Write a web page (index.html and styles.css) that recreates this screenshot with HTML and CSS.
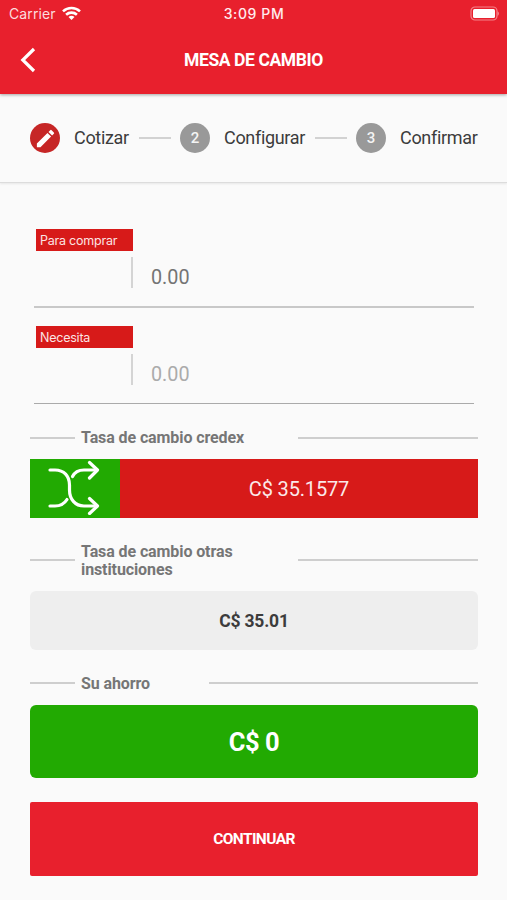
FILE: index.html
```html
<!DOCTYPE html>
<html lang="es">
<head>
<meta charset="utf-8">
<title>Mesa de cambio</title>
<link rel="stylesheet" href="styles.css">
</head>
<body>
<header class="header">
  <div class="status">
    <div class="status-left">
      <span class="carrier">Carrier</span>
      <svg class="wifi" width="19" height="15" viewBox="0 0 19 15" fill="none" stroke="#fff" stroke-width="2.6">
        <path d="M1 5.4C5.8.9 13.200.9 18 5.400M4.100 8.700C7.100 5.900 11.900 5.900 14.900 8.700"/>
        <path d="M6.500 11C8.200 9.400 10.800 9.400 12.500 11L9.500 14Z" fill="#fff" stroke="none"/>
      </svg>
    </div>
    <span class="clock">3:09 PM</span>
    <div class="status-right">
      <svg width="31" height="15" viewBox="0 0 31 15">
        <rect x="3" y="1" width="26" height="13" rx="4" fill="none" stroke="#f4828a" stroke-width="1.2"/>
        <rect x="5" y="3" width="22" height="9" rx="1.500" fill="#fff"/>
        <path d="M29.600 5.200C31.200 6 31.200 9 29.600 9.800Z" fill="#f4949a"/>
      </svg>
    </div>
  </div>
  <div class="titlebar">
    <svg class="back" width="16" height="26" viewBox="0 0 16 26" fill="none" stroke="#fff" stroke-width="3.200">
      <path d="M14 2L2.800 13L14 24"/>
    </svg>
    <h1 class="title">MESA DE CAMBIO</h1>
    <span></span>
  </div>
</header>
<nav class="steps">
  <span class="dot active">
    <svg width="23" height="23" viewBox="0 0 24 24" fill="#fff">
      <path d="M3 17.250V21h3.750L17.810 9.940l-3.750-3.750zM20.710 7.040a1 1 0 0 0 0-1.410l-2.340-2.340a1 1 0 0 0-1.410 0l-1.830 1.830 3.750 3.750z"/>
    </svg>
  </span>
  <span class="step-name one">Cotizar</span>
  <span class="link"></span>
  <span class="dot">2</span>
  <span class="step-name two">Configurar</span>
  <span class="link"></span>
  <span class="dot">3</span>
  <span class="step-name three">Confirmar</span>
</nav>
<main class="content">
  <div class="field">
    <span class="tag">Para comprar</span>
    <div class="entry"><span class="currency"></span><span class="amount">0.00</span></div>
  </div>
  <div class="field readonly">
    <span class="tag">Necesita</span>
    <div class="entry"><span class="currency"></span><span class="amount">0.00</span></div>
  </div>
  <div class="divider credex"><h2>Tasa de cambio credex</h2></div>
  <div class="rate">
    <div class="rate-icon">
      <svg width="54" height="56" viewBox="0 0 54 56" fill="none" stroke="#fff" stroke-width="3.200" stroke-linecap="round" stroke-linejoin="round">
        <path d="M3 11H8C17 11 22.500 17 22.500 26V31C22.500 40 28 47 37 47H49"/>
        <path d="M25.500 17.500C27.500 13.500 32 11 37 11H49M3 47H8C13 47 17.500 44.500 20 40.500"/>
        <path d="M42.500 3.500L50.500 11L42.500 19M42.500 39.500L50.500 47L42.500 54.500"/>
      </svg>
    </div>
    <div class="rate-value">C$ 35.1577</div>
  </div>
  <div class="divider others"><h2>Tasa de cambio otras instituciones</h2></div>
  <div class="other-rate">C$ 35.01</div>
  <div class="divider savings"><h2>Su ahorro</h2></div>
  <div class="saved">C$ 0</div>
  <button class="continue">CONTINUAR</button>
</main>
</body>
</html>
```
FILE: styles.css
```css
* { box-sizing: border-box; }
body { margin: 0; min-height: 900px; background: #fafafa; font-family: Roboto, sans-serif; color: #3c3c3c; }
h1, h2 { margin: 0; }
svg { display: block; }
.header { height: 94px; background: #e8202d; color: #fff; position: relative; box-shadow: 0 1px 3px rgba(0,0,0,.35); }
.status { height: 27px; display: grid; grid-template-columns: 1fr auto 1fr; align-items: center; padding: 0 8px 0 9px; font: 14px/27px Inter, sans-serif; }
.status-left { display: flex; align-items: center; gap: 6px; }
.carrier { color: #fcdcde; letter-spacing: .1px; }
.clock { font-weight: 500; font-size: 14px; letter-spacing: .6px; color: #ffeced; }
.status-right { justify-self: end; }
.titlebar { height: 66px; display: grid; grid-template-columns: 1fr auto 1fr; align-items: center; padding: 0 20px; }
.title { font-size: 17.500px; line-height: 24px; font-weight: 700; letter-spacing: -.4px; }
.steps { height: 89px; display: flex; align-items: center; padding: 0 30px; border-bottom: 1px solid #dcdcdc; box-shadow: 0 1px 2px rgba(0,0,0,.08); }
.dot { width: 30px; height: 30px; flex: none; border-radius: 50%; background: #999; color: #f4f4f4; font-size: 15px; font-weight: 500; display: flex; align-items: center; justify-content: center; }
.dot.active { background: #c62626; }
.step-name { margin-left: 14px; padding-bottom: 2px; font-size: 18px; letter-spacing: -.32px; white-space: nowrap; flex: none; }
.one { width: 65px; }
.two { width: 91px; }
.link { width: 32px; height: 2px; background: #d2d2d2; margin-right: 9px; flex: none; }
.content { padding: 46px 29px 0 30px; }
.field { margin: 0 4px; height: 79px; border-bottom: 2px solid #c8c8c8; }
.field + .field { margin-top: 18px; height: 78px; border-bottom: 1px solid #aaa; }
.tag { display: block; width: 97px; height: 22px; margin-left: 2px; padding-left: 4px; background: #d71a19; color: #fbe4e4; font: 12.500px/23px Inter, sans-serif; letter-spacing: -.23px; }
.entry { display: flex; align-items: center; padding-top: 6px; height: 37px; }
.currency { width: 99px; height: 31px; border-right: 2px solid #d4d4d4; }
.amount { margin-left: 18px; padding-top: 9px; color: #747474; font-size: 19.800px; }
.readonly .amount { color: #ababab; }
.divider { display: grid; grid-template-columns: 45px 1fr 180px; column-gap: 6px; align-items: center; }
.divider::before, .divider::after { content: ""; height: 2px; background: #cecece; }
.divider h2 { padding-top: 1px; margin-bottom: -1px; font-size: 16px; line-height: 18px; font-weight: 700; letter-spacing: -.1px; color: #767676; }
.credex { height: 18px; margin-top: 25px; }
.credex h2 { padding-top: 0; margin-bottom: 0; }
.rate { height: 59px; display: flex; margin-top: 12px; }
.rate-icon { width: 90px; padding: 0 2px 3px 0; background: #22aa02; display: flex; align-items: center; justify-content: center; }
.rate-value { flex: 1; background: #d71a19; color: #fbe9e9; font-size: 20px; letter-spacing: -.15px; display: flex; align-items: center; justify-content: center; }
.others { height: 36px; margin-top: 24px; }
.other-rate { height: 59px; margin-top: 13px; border-radius: 6px; background: #eee; display: flex; align-items: center; justify-content: center; font-size: 17.500px; font-weight: 700; letter-spacing: -.2px; }
.savings { height: 18px; margin-top: 24px; grid-template-columns: 45px 1fr 269px; }
.saved { height: 73px; margin-top: 13px; border-radius: 6px; background: #22aa02; color: #fff; display: flex; align-items: center; justify-content: center; font-size: 25.500px; font-weight: 700; letter-spacing: -.5px; }
.continue { display: block; width: 100%; height: 74px; margin-top: 24px; padding: 0; border: 0; border-radius: 2px; background: #e8202d; color: #fff; font: 700 15.500px Roboto, sans-serif; letter-spacing: -.6px; }
```
